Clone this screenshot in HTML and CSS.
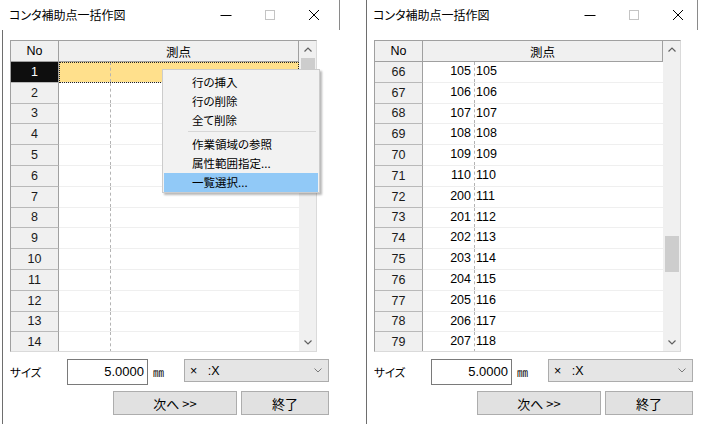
FILE: index.html
```html
<!DOCTYPE html>
<html lang="ja">
<head>
<meta charset="utf-8">
<title>コンタ補助点一括作図</title>
<link rel="stylesheet" href="styles.css">
</head>
<body>
<div class="desk">
  <div class="win win-a">
    <div class="titlebar tb-a">
      <span class="title">コンタ補助点一括作図</span>
      <div class="controls">
        <span class="ctl"><svg width="12" height="12" viewBox="0 0 12 12"><path d="M0.5 6.5H11.5" stroke="#000" stroke-width="1"/></svg></span>
        <span class="ctl"><svg width="12" height="12" viewBox="0 0 12 12"><rect x="1.5" y="1.5" width="9" height="9" fill="none" stroke="#c4c4c4" stroke-width="1"/></svg></span>
        <span class="ctl"><svg width="12" height="12" viewBox="0 0 12 12"><path d="M1 1L11 11M11 1L1 11" stroke="#000" stroke-width="1"/></svg></span>
      </div>
    </div>
    <div class="body">
      <div class="grid">
        <div class="table">
          <div class="hrow"><div class="hno">No</div><div class="hpt">測点</div></div>
          <div class="row"><div class="no no-sel">1</div><div class="cell cell-sel"><span class="a"></span><span class="b"></span></div></div>
          <div class="row"><div class="no">2</div><div class="cell"><span class="a"></span><span class="b"></span></div></div>
          <div class="row"><div class="no">3</div><div class="cell"><span class="a"></span><span class="b"></span></div></div>
          <div class="row"><div class="no">4</div><div class="cell"><span class="a"></span><span class="b"></span></div></div>
          <div class="row"><div class="no">5</div><div class="cell"><span class="a"></span><span class="b"></span></div></div>
          <div class="row"><div class="no">6</div><div class="cell"><span class="a"></span><span class="b"></span></div></div>
          <div class="row"><div class="no">7</div><div class="cell"><span class="a"></span><span class="b"></span></div></div>
          <div class="row"><div class="no">8</div><div class="cell"><span class="a"></span><span class="b"></span></div></div>
          <div class="row"><div class="no">9</div><div class="cell"><span class="a"></span><span class="b"></span></div></div>
          <div class="row"><div class="no">10</div><div class="cell"><span class="a"></span><span class="b"></span></div></div>
          <div class="row"><div class="no">11</div><div class="cell"><span class="a"></span><span class="b"></span></div></div>
          <div class="row"><div class="no">12</div><div class="cell"><span class="a"></span><span class="b"></span></div></div>
          <div class="row"><div class="no">13</div><div class="cell"><span class="a"></span><span class="b"></span></div></div>
          <div class="row"><div class="no">14</div><div class="cell"><span class="a"></span><span class="b"></span></div></div>
        </div>
        <div class="vscroll">
          <div class="arrow"><svg width="8" height="5" viewBox="0 0 8 5"><path d="M0.5 4.5L4 1L7.5 4.5" fill="none" stroke="#606060" stroke-width="1.2"/></svg></div>
          <div class="track"><div class="thumb thumb-a"></div></div>
          <div class="arrow"><svg width="8" height="5" viewBox="0 0 8 5"><path d="M0.5 0.5L4 4L7.5 0.5" fill="none" stroke="#606060" stroke-width="1.2"/></svg></div>
        </div>
      </div>
      <div class="size-row">
        <span class="label">サイズ</span>
        <div class="input">5.0000</div>
        <span class="unit">㎜</span>
        <div class="select"><span class="sel-text">×&nbsp;&nbsp; :X</span><svg width="8" height="5" viewBox="0 0 8 5"><path d="M0.5 0.5L4 4L7.5 0.5" fill="none" stroke="#7a7a7a" stroke-width="1"/></svg></div>
      </div>
      <div class="btn-row">
        <div class="btn btn-next">次へ &gt;&gt;</div>
        <div class="btn btn-end">終了</div>
      </div>
    </div>
    <div class="menu">
      <div class="mi">行の挿入</div>
      <div class="mi">行の削除</div>
      <div class="mi">全て削除</div>
      <div class="msep"></div>
      <div class="mi">作業領域の参照</div>
      <div class="mi">属性範囲指定...</div>
      <div class="mi mi-hot">一覧選択...</div>
    </div>
  </div>

  <div class="win win-b">
    <div class="titlebar tb-b">
      <span class="title">コンタ補助点一括作図</span>
      <div class="controls">
        <span class="ctl"><svg width="12" height="12" viewBox="0 0 12 12"><path d="M0.5 6.5H11.5" stroke="#000" stroke-width="1"/></svg></span>
        <span class="ctl"><svg width="12" height="12" viewBox="0 0 12 12"><rect x="1.5" y="1.5" width="9" height="9" fill="none" stroke="#c4c4c4" stroke-width="1"/></svg></span>
        <span class="ctl"><svg width="12" height="12" viewBox="0 0 12 12"><path d="M1 1L11 11M11 1L1 11" stroke="#000" stroke-width="1"/></svg></span>
      </div>
    </div>
    <div class="body">
      <div class="grid">
        <div class="table">
          <div class="hrow"><div class="hno">No</div><div class="hpt">測点</div></div>
          <div class="row"><div class="no">66</div><div class="cell"><span class="a">105</span><span class="b">105</span></div></div>
          <div class="row"><div class="no">67</div><div class="cell"><span class="a">106</span><span class="b">106</span></div></div>
          <div class="row"><div class="no">68</div><div class="cell"><span class="a">107</span><span class="b">107</span></div></div>
          <div class="row"><div class="no">69</div><div class="cell"><span class="a">108</span><span class="b">108</span></div></div>
          <div class="row"><div class="no">70</div><div class="cell"><span class="a">109</span><span class="b">109</span></div></div>
          <div class="row"><div class="no">71</div><div class="cell"><span class="a">110</span><span class="b">110</span></div></div>
          <div class="row"><div class="no">72</div><div class="cell"><span class="a">200</span><span class="b">111</span></div></div>
          <div class="row"><div class="no">73</div><div class="cell"><span class="a">201</span><span class="b">112</span></div></div>
          <div class="row"><div class="no">74</div><div class="cell"><span class="a">202</span><span class="b">113</span></div></div>
          <div class="row"><div class="no">75</div><div class="cell"><span class="a">203</span><span class="b">114</span></div></div>
          <div class="row"><div class="no">76</div><div class="cell"><span class="a">204</span><span class="b">115</span></div></div>
          <div class="row"><div class="no">77</div><div class="cell"><span class="a">205</span><span class="b">116</span></div></div>
          <div class="row"><div class="no">78</div><div class="cell"><span class="a">206</span><span class="b">117</span></div></div>
          <div class="row"><div class="no">79</div><div class="cell"><span class="a">207</span><span class="b">118</span></div></div>
        </div>
        <div class="vscroll">
          <div class="arrow"><svg width="8" height="5" viewBox="0 0 8 5"><path d="M0.5 4.5L4 1L7.5 4.5" fill="none" stroke="#606060" stroke-width="1.2"/></svg></div>
          <div class="track"><div class="thumb thumb-b"></div></div>
          <div class="arrow"><svg width="8" height="5" viewBox="0 0 8 5"><path d="M0.5 0.5L4 4L7.5 0.5" fill="none" stroke="#606060" stroke-width="1.2"/></svg></div>
        </div>
      </div>
      <div class="size-row">
        <span class="label">サイズ</span>
        <div class="input">5.0000</div>
        <span class="unit">㎜</span>
        <div class="select"><span class="sel-text">×&nbsp;&nbsp; :X</span><svg width="8" height="5" viewBox="0 0 8 5"><path d="M0.5 0.5L4 4L7.5 0.5" fill="none" stroke="#7a7a7a" stroke-width="1"/></svg></div>
      </div>
      <div class="btn-row">
        <div class="btn btn-next">次へ &gt;&gt;</div>
        <div class="btn btn-end">終了</div>
      </div>
    </div>
  </div>
</div>
</body>
</html>
```

FILE: styles.css
```css
* { box-sizing: border-box; }
html, body { margin: 0; padding: 0; background: #fff; }
body {
  width: 704px;
  height: 424px;
  overflow: hidden;
  font-family: "Noto Sans CJK JP", "Liberation Sans", sans-serif;
  color: #000;
}
.desk { display: flex; height: 424px; }

.win { width: 338px; height: 424px; display: flex; flex-direction: column; position: relative; }
.win-a { margin-left: 2px; }
.win-b { margin-left: 26px; }

.titlebar {
  height: 30px;
  flex: 0 0 30px;
  display: flex;
  align-items: center;
  padding-left: 6px;
  background: #fff;
  border-left: 1px solid transparent;
}
.tb-a { width: 338px; border-right: 1px solid #8a8a8a; }
.tb-b { width: 332px; border-left: 1px solid #6e6e6e; border-right: 1px solid #8a8a8a; }
.title {
  flex: 0 0 211px;
  font-size: 12px;
  font-feature-settings: "palt";
  line-height: 14px;
  white-space: nowrap;
}
.controls { display: flex; gap: 32px; align-items: center; }
.ctl { width: 12px; height: 12px; display: block; }
.ctl svg { display: block; }

.body {
  flex: 1;
  border-left: 1px solid #6e6e6e;
  padding: 10px 0 0 7px;
}

.grid {
  width: 307px;
  height: 312px;
  display: flex;
  border-top: 1px solid #a0a0a0;
  border-left: 1px solid #a0a0a0;
  border-right: 1px solid #dadada;
  border-bottom: 1px solid #dadada;
  overflow: hidden;
}
.table { width: 288px; overflow: hidden; background: #fff; }
.hrow {
  display: flex;
  height: 21px;
  background: #f0f0f0;
  border-bottom: 1px solid #a0a0a0;
}
.hno, .hpt {
  display: flex;
  align-items: center;
  justify-content: center;
  border-right: 1px solid #a0a0a0;
}
.hno { width: 48px; font-family: "Liberation Sans", sans-serif; font-size: 12.5px; }
.hpt { width: 240px; font-size: 12.5px; }

.row { display: flex; height: 20.8px; }
.no {
  width: 48px;
  background: #f0f0f0;
  border-right: 1px solid #a0a0a0;
  border-bottom: 1px solid #b9b9b9;
  display: flex;
  align-items: center;
  justify-content: center;
  font-family: "Liberation Sans", sans-serif;
  font-size: 12.5px;
  color: #1a1a1a;
}
.no-sel { background: #0e0e0e; color: #fff; }
.cell {
  width: 240px;
  display: flex;
  border-bottom: 1px solid #efefef;
  font-family: "Liberation Sans", sans-serif;
  font-size: 12.5px;
  line-height: 19px;
}
.cell-sel { background: #ffe08c; outline: 1px dotted #222; outline-offset: -1px; }
.cell .a {
  width: 52px;
  border-right: 1px dashed #b4b4b4;
  text-align: right;
  padding-right: 3px;
}
.cell .b { padding-left: 1px; }

.vscroll { width: 17px; background: #f0f0f0; display: flex; flex-direction: column; }
.arrow { height: 17px; flex: 0 0 17px; display: flex; align-items: center; justify-content: center; }
.arrow svg { display: block; }
.track { flex: 1; }
.thumb { margin: 0 1px 0 2px; background: #cdcdcd; }
.thumb-a { height: 36px; }
.thumb-b { margin-top: 178px; height: 36px; }

.size-row { display: flex; align-items: flex-start; margin-top: 7px; height: 26px; }
.label { width: 57px; font-size: 11.5px; font-feature-settings: "palt"; line-height: 26px; }
.input {
  width: 81px;
  height: 26px;
  border: 1px solid #7a7a7a;
  background: #fff;
  text-align: right;
  padding-right: 3px;
  font-family: "Liberation Sans", sans-serif;
  font-size: 13px;
  line-height: 23px;
}
.unit { width: 36px; padding-left: 5px; font-size: 11px; line-height: 27px; }
.select {
  width: 145px;
  height: 23px;
  border: 1px solid #acacac;
  background: #e5e5e5;
  display: flex;
  align-items: center;
  justify-content: space-between;
  padding: 0 6px 0 5px;
}
.sel-text { font-family: "Liberation Sans", sans-serif; font-size: 12.5px; white-space: pre; }
.select svg { display: block; }

.btn-row { display: flex; gap: 4px; margin-top: 6px; padding-left: 103px; }
.btn {
  height: 24px;
  background: #e1e1e1;
  border: 1px solid #adadad;
  display: flex;
  align-items: center;
  justify-content: center;
  font-size: 13px;
}
.btn-next { width: 124px; }
.btn-end { width: 88px; }

.menu {
  position: absolute;
  left: 160px;
  top: 69px;
  width: 158px;
  height: 124px;
  background: #f2f2f2;
  border: 1px solid #cccccc;
  box-shadow: 2px 2px 2px rgba(0, 0, 0, 0.28);
  padding: 3px 1px 1px 1px;
}
.mi {
  height: 19px;
  padding-left: 28px;
  font-size: 11.5px;
  font-feature-settings: "palt";
  line-height: 19px;
  color: #000;
  white-space: nowrap;
}
.mi-hot { background: #91c9f7; }
.msep { height: 5px; padding: 1px 2px 0 24px; }
.msep::before { content: ""; display: block; height: 1px; background: #d7d7d7; }
```
